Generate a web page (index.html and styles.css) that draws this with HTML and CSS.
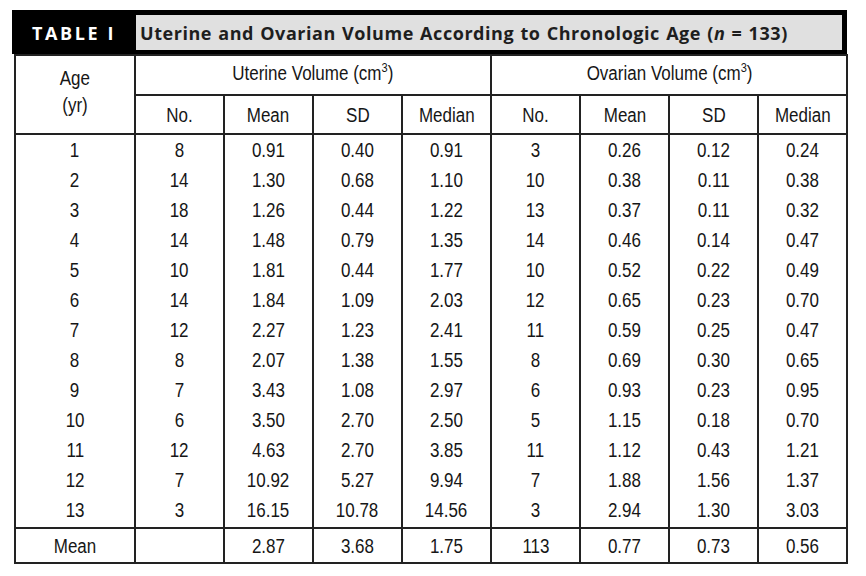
FILE: index.html
```html
<!DOCTYPE html>
<html>
<head>
<meta charset="utf-8">
<link rel="stylesheet" href="styles.css">
</head>
<body>
<div class="figure">
  <div class="titlebar">
    <div class="label">TABLE I</div>
    <div class="caption">Uterine and Ovarian Volume According to Chronologic Age (<i>n</i> = 133)</div>
  </div>
  <table class="data">
    <colgroup>
      <col class="c-age">
      <col class="c"><col class="c"><col class="c"><col class="c">
      <col class="c"><col class="c"><col class="c"><col class="c">
    </colgroup>
    <thead>
      <tr class="h1">
        <th rowspan="2" class="age-h"><span>Age</span><br><span>(yr)</span></th>
        <th colspan="4" class="grp"><span>Uterine Volume (cm<sup>3</sup>)</span></th>
        <th colspan="4" class="grp"><span>Ovarian Volume (cm<sup>3</sup>)</span></th>
      </tr>
      <tr class="h2">
        <th><span>No.</span></th><th><span>Mean</span></th><th><span>SD</span></th><th><span>Median</span></th>
        <th><span>No.</span></th><th><span>Mean</span></th><th><span>SD</span></th><th><span>Median</span></th>
      </tr>
    </thead>
    <tbody>
      <tr class="first"><td><span>1</span></td><td><span>8</span></td><td><span>0.91</span></td><td><span>0.40</span></td><td><span>0.91</span></td><td><span>3</span></td><td><span>0.26</span></td><td><span>0.12</span></td><td><span>0.24</span></td></tr>
      <tr><td><span>2</span></td><td><span>14</span></td><td><span>1.30</span></td><td><span>0.68</span></td><td><span>1.10</span></td><td><span>10</span></td><td><span>0.38</span></td><td><span>0.11</span></td><td><span>0.38</span></td></tr>
      <tr><td><span>3</span></td><td><span>18</span></td><td><span>1.26</span></td><td><span>0.44</span></td><td><span>1.22</span></td><td><span>13</span></td><td><span>0.37</span></td><td><span>0.11</span></td><td><span>0.32</span></td></tr>
      <tr><td><span>4</span></td><td><span>14</span></td><td><span>1.48</span></td><td><span>0.79</span></td><td><span>1.35</span></td><td><span>14</span></td><td><span>0.46</span></td><td><span>0.14</span></td><td><span>0.47</span></td></tr>
      <tr><td><span>5</span></td><td><span>10</span></td><td><span>1.81</span></td><td><span>0.44</span></td><td><span>1.77</span></td><td><span>10</span></td><td><span>0.52</span></td><td><span>0.22</span></td><td><span>0.49</span></td></tr>
      <tr><td><span>6</span></td><td><span>14</span></td><td><span>1.84</span></td><td><span>1.09</span></td><td><span>2.03</span></td><td><span>12</span></td><td><span>0.65</span></td><td><span>0.23</span></td><td><span>0.70</span></td></tr>
      <tr><td><span>7</span></td><td><span>12</span></td><td><span>2.27</span></td><td><span>1.23</span></td><td><span>2.41</span></td><td><span>11</span></td><td><span>0.59</span></td><td><span>0.25</span></td><td><span>0.47</span></td></tr>
      <tr><td><span>8</span></td><td><span>8</span></td><td><span>2.07</span></td><td><span>1.38</span></td><td><span>1.55</span></td><td><span>8</span></td><td><span>0.69</span></td><td><span>0.30</span></td><td><span>0.65</span></td></tr>
      <tr><td><span>9</span></td><td><span>7</span></td><td><span>3.43</span></td><td><span>1.08</span></td><td><span>2.97</span></td><td><span>6</span></td><td><span>0.93</span></td><td><span>0.23</span></td><td><span>0.95</span></td></tr>
      <tr><td><span>10</span></td><td><span>6</span></td><td><span>3.50</span></td><td><span>2.70</span></td><td><span>2.50</span></td><td><span>5</span></td><td><span>1.15</span></td><td><span>0.18</span></td><td><span>0.70</span></td></tr>
      <tr><td><span>11</span></td><td><span>12</span></td><td><span>4.63</span></td><td><span>2.70</span></td><td><span>3.85</span></td><td><span>11</span></td><td><span>1.12</span></td><td><span>0.43</span></td><td><span>1.21</span></td></tr>
      <tr><td><span>12</span></td><td><span>7</span></td><td><span>10.92</span></td><td><span>5.27</span></td><td><span>9.94</span></td><td><span>7</span></td><td><span>1.88</span></td><td><span>1.56</span></td><td><span>1.37</span></td></tr>
      <tr class="last"><td><span>13</span></td><td><span>3</span></td><td><span>16.15</span></td><td><span>10.78</span></td><td><span>14.56</span></td><td><span>3</span></td><td><span>2.94</span></td><td><span>1.30</span></td><td><span>3.03</span></td></tr>
    </tbody>
    <tfoot>
      <tr><td><span>Mean</span></td><td></td><td><span>2.87</span></td><td><span>3.68</span></td><td><span>1.75</span></td><td><span>113</span></td><td><span>0.77</span></td><td><span>0.73</span></td><td><span>0.56</span></td></tr>
    </tfoot>
  </table>
</div>
</body>
</html>
```
FILE: styles.css
```css
html, body {
  margin: 0;
  padding: 0;
  background: #ffffff;
}

.figure {
  padding: 10px 0 0 12px;
  width: 835px;
}

.titlebar {
  display: flex;
  background: #000;
  padding: 5px 5px 4px 0;
  height: 35px;
}

.label {
  width: 124px;
  color: #fff;
  font-family: "Open Sans", Lato, sans-serif;
  font-weight: 700;
  font-size: 18px;
  letter-spacing: 2.6px;
  display: flex;
  align-items: center;
  justify-content: center;
  padding-top: 1px;
}

.caption {
  flex: 1;
  background: #e0e0e0;
  color: #1e1e1e;
  font-family: "Open Sans", Lato, sans-serif;
  font-weight: 700;
  font-size: 18px;
  letter-spacing: 0.55px;
  word-spacing: 1px;
  display: flex;
  align-items: center;
  padding-left: 4px;
  padding-top: 1px;
  white-space: pre;
}

.caption i {
  font-style: italic;
}

.data {
  margin-left: 2px;
  width: 830px;
  border-collapse: collapse;
  table-layout: fixed;
  font-family: "Liberation Sans", Arial, sans-serif;
  font-size: 20px;
  line-height: 22px;
  color: #161616;
  border: 2px solid #222;
}

.data span {
  display: inline-block;
  transform: scaleX(0.85);
  white-space: nowrap;
}

.c-age { width: 120px; }
.c { width: 89px; }

.data th, .data td {
  text-align: center;
  font-weight: 400;
  padding: 0;
  border-left: 2px solid #222;
  border-right: 2px solid #222;
}

.h1 th {
  height: 34px;
  vertical-align: middle;
  padding-bottom: 4px;
}

.h1 .grp {
  border-bottom: 2px solid #222;
}

.h1 th.age-h {
  line-height: 27px;
  vertical-align: top;
  padding: 9px 0 0 0;
  border-bottom: 2px solid #222;
}

.h2 th {
  height: 36px;
  border-bottom: 2px solid #222;
  padding-top: 1px;
}

.data sup {
  font-size: 13px;
  line-height: 0;
  vertical-align: 8px;
}

tbody td {
  height: 30px;
}

tbody tr.last td {
  height: 30px;
  padding-bottom: 2px;
}

tfoot td {
  height: 33px;
  border-top: 2px solid #222;
}
```
